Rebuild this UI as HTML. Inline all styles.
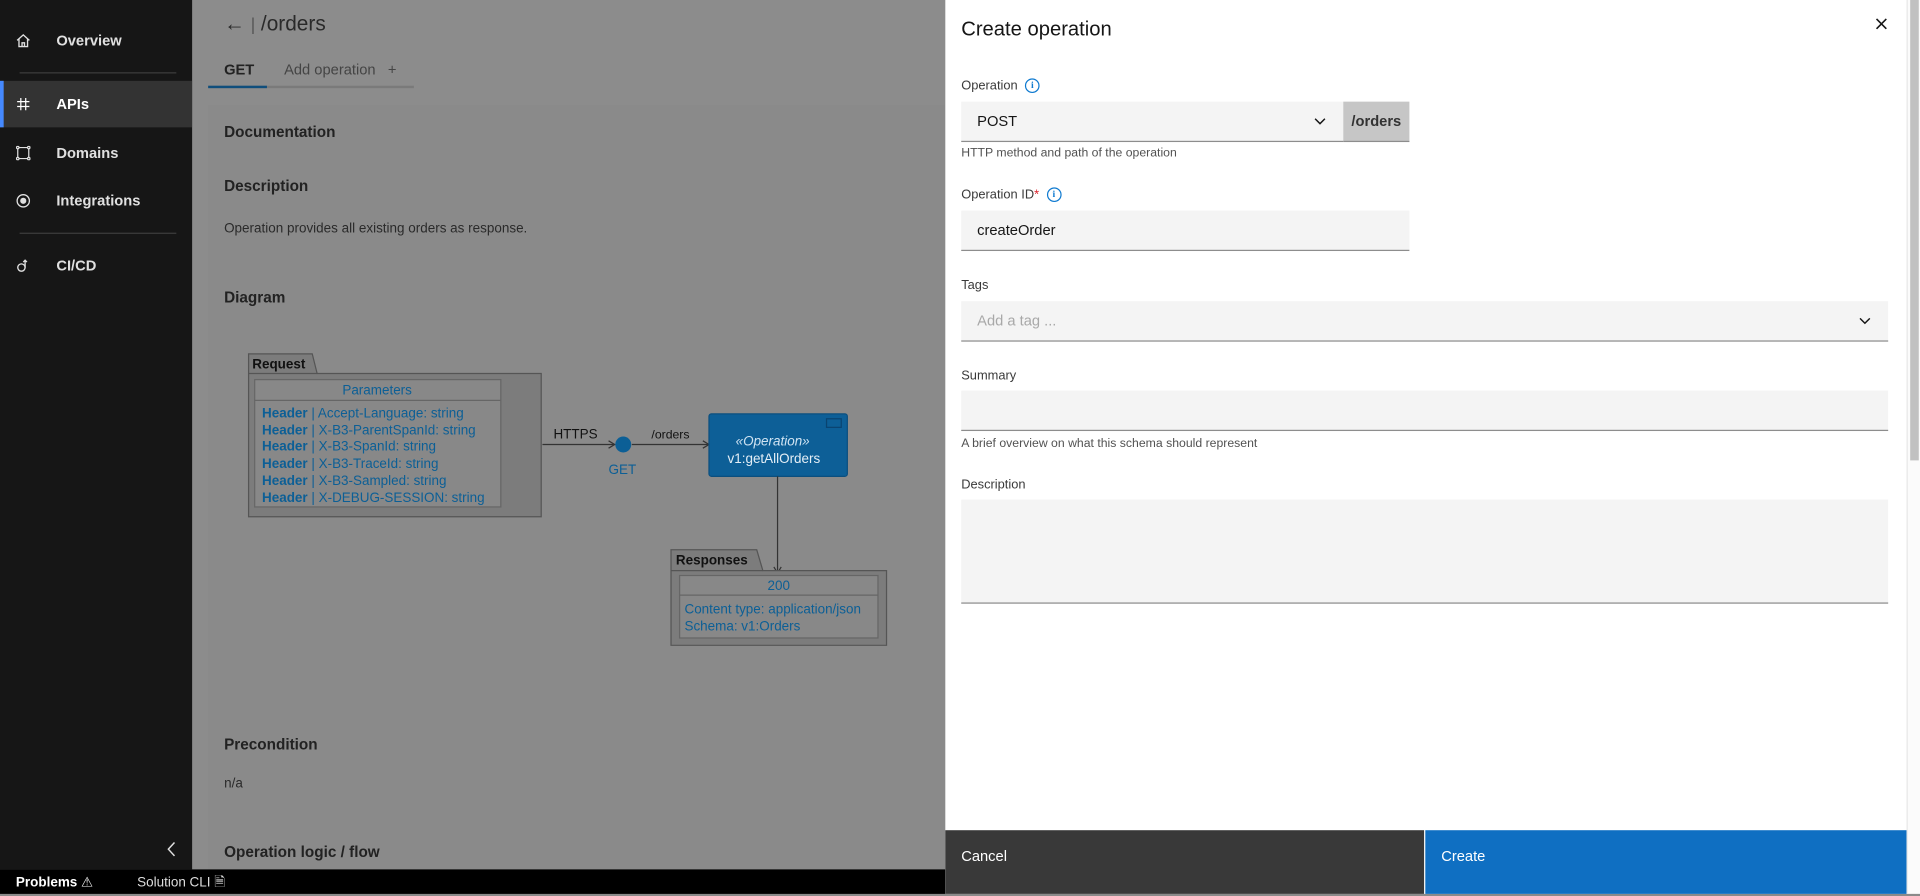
<!DOCTYPE html>
<html><head><meta charset="utf-8"><style>
*{box-sizing:border-box;margin:0;padding:0}
html,body{width:1920px;height:894px;overflow:hidden;background:#8a8a8a}
#w{position:absolute;left:0;top:0;width:1568px;height:730px;transform:scale(1.22449);transform-origin:0 0;font-family:"Liberation Sans","DejaVu Sans",sans-serif;}
.a{position:absolute}
.side{left:0;top:0;width:157px;height:710px;background:#161616}
.nav{position:absolute;left:0;width:157px;height:38px;color:#e0e0e0;font-size:12px;font-weight:bold;line-height:38px;padding-left:46px}
.nav svg{position:absolute;left:13px;top:13px}
.div{position:absolute;left:16px;width:128px;height:1px;background:#3d3d3d}
.main{left:157px;top:0;width:615px;height:710px;background:#8c8c8c}
.h{position:absolute;left:13px;font-size:12.5px;font-weight:bold;color:#222}
.lbl{position:absolute;left:13px;font-size:10.5px;color:#3a3a3a}
.fld{position:absolute;left:13px;background:#f4f4f4;border-bottom:1px solid #8d8d8d}
.help{position:absolute;left:13px;font-size:10px;color:#525252}
.info{display:inline-block;width:12px;height:12px;border:1.3px solid #0f7ad0;border-radius:50%;color:#0f7ad0;font-size:8px;text-align:center;line-height:10px;font-weight:bold;vertical-align:middle;margin-left:6px;font-family:"Liberation Serif",serif}
</style></head><body><div id="w">
<div class="a side">
 <div class="nav" style="top:14px"><svg width="12" height="12" viewBox="0 0 12 12" fill="none" stroke="#e0e0e0" stroke-width="1.1"><path d="M1 6 L6 1.5 L11 6 M2.5 5 V11 H9.5 V5 M5 11 V8 H7 V11"/></svg>Overview</div>
 <div class="div" style="top:59px"></div>
 <div class="nav" style="top:66px;background:#333;color:#fff"><div style="position:absolute;left:0;top:0;width:3px;height:38px;background:#4589ff"></div><svg width="12" height="12" viewBox="0 0 12 12" stroke="#fff" stroke-width="1"><path d="M4 1V11M8 1V11M1 4H11M1 8H11"/></svg>APIs</div>
 <div class="nav" style="top:106px"><svg width="12" height="12" viewBox="0 0 12 12" fill="none" stroke="#e0e0e0" stroke-width="1"><path d="M2.5 1.5H9.5M2.5 10.5H9.5M1.5 2.5V9.5M10.5 2.5V9.5"/><circle cx="1.5" cy="1.5" r="1"/><circle cx="10.5" cy="1.5" r="1"/><circle cx="1.5" cy="10.5" r="1"/><circle cx="10.5" cy="10.5" r="1"/></svg>Domains</div>
 <div class="nav" style="top:145px"><svg width="12" height="12" viewBox="0 0 12 12"><circle cx="6" cy="6" r="5" fill="none" stroke="#e0e0e0" stroke-width="1.1"/><circle cx="6" cy="6" r="2.5" fill="#e0e0e0"/></svg>Integrations</div>
 <div class="div" style="top:190px"></div>
 <div class="nav" style="top:198px"><svg width="12" height="12" viewBox="0 0 12 12" fill="none" stroke="#e0e0e0" stroke-width="1.1"><circle cx="4.5" cy="7.5" r="3"/><path d="M7.5 7.5V1.5M6 3L7.5 1.5L9 3"/></svg>CI/CD</div>
 <svg class="a" style="left:136px;top:687px" width="8" height="13" viewBox="0 0 8 13"><path d="M6.5 1L1.5 6.5L6.5 12" fill="none" stroke="#e0e0e0" stroke-width="1.2"/></svg>
</div>
<div class="a main">
 <div class="a" style="left:26px;top:10px;font-size:17px;color:#2a2a2a">&#8592; <span style="color:#555;font-size:14px">|</span> /orders</div>
 <div class="a" style="left:26px;top:50px;font-size:12px;font-weight:bold;color:#222">GET</div>
 <div class="a" style="left:75px;top:50px;font-size:12px;color:#444">Add operation &nbsp;&nbsp;+</div>
 <div class="a" style="left:13px;top:70px;width:168px;height:2px;background:#7a7a7a"></div>
 <div class="a" style="left:13px;top:70px;width:48px;height:2px;background:#0f4e7c"></div>
 <div class="a" style="left:13px;top:86px;width:602px;height:624px;background:#8a8a8a">
  <div class="h" style="top:15px">Documentation</div>
  <div class="h" style="top:59px">Description</div>
  <div class="a" style="left:13px;top:95px;font-size:11px;color:#2a2a2a">Operation provides all existing orders as response.</div>
  <div class="h" style="top:150px">Diagram</div>
  <div class="h" style="top:515px">Precondition</div>
  <div class="a" style="left:13px;top:548px;font-size:11px;color:#2a2a2a">n/a</div>
  <div class="h" style="top:603px">Operation logic / flow</div>
 </div>
 <svg class="a" style="left:0;top:0" width="615" height="710" font-family="Liberation Sans,sans-serif" font-size="11">
  <path d="M46 289 H98 L102 305 H285 V422 H46 Z" fill="#7c7c7c" stroke="#555" stroke-width="1"/>
  <line x1="46" y1="305" x2="102" y2="305" stroke="#555"/>
  <text x="49" y="301" font-weight="bold" fill="#111" font-size="11">Request</text>
  <rect x="51" y="310" width="201" height="104" fill="#888" stroke="#666"/>
  <line x1="51" y1="327" x2="252" y2="327" stroke="#666"/>
  <text x="151" y="322" text-anchor="middle" fill="#0c5f96">Parameters</text>
  <g fill="#0c5f96"><text x="57" y="341"><tspan font-weight="bold">Header</tspan> | Accept-Language: string</text>
  <text x="57" y="355"><tspan font-weight="bold">Header</tspan> | X-B3-ParentSpanId: string</text>
  <text x="57" y="368"><tspan font-weight="bold">Header</tspan> | X-B3-SpanId: string</text>
  <text x="57" y="382"><tspan font-weight="bold">Header</tspan> | X-B3-TraceId: string</text>
  <text x="57" y="396"><tspan font-weight="bold">Header</tspan> | X-B3-Sampled: string</text>
  <text x="57" y="410"><tspan font-weight="bold">Header</tspan> | X-DEBUG-SESSION: string</text></g>
  <line x1="286" y1="363" x2="344" y2="363" stroke="#333"/><path d="M340 360L345 363L340 366" fill="none" stroke="#333"/>
  <text x="295" y="358" fill="#111">HTTPS</text>
  <circle cx="352" cy="363" r="6.5" fill="#0c5f96"/>
  <text x="340" y="387" fill="#0c5f96">GET</text>
  <line x1="359" y1="363" x2="421" y2="363" stroke="#333"/><path d="M417 360L422 363L417 366" fill="none" stroke="#333"/>
  <text x="375" y="358" fill="#111" font-size="10">/orders</text>
  <rect x="422" y="338" width="113" height="51" rx="2" fill="#0d5f97" stroke="#0b4f7f"/>
  <rect x="518" y="342" width="12" height="7" fill="none" stroke="#0a4470"/>
  <text x="474" y="364" text-anchor="middle" fill="#cfe3f2" font-style="italic">«Operation»</text>
  <text x="475" y="378" text-anchor="middle" fill="#e4eef6">v1:getAllOrders</text>
  <line x1="478" y1="389" x2="478" y2="468" stroke="#333"/><path d="M475 463L478 468L481 463" fill="none" stroke="#333"/>
  <path d="M391 449 H461 L466 466 H567 V527 H391 Z" fill="#7c7c7c" stroke="#555"/>
  <line x1="391" y1="466" x2="466" y2="466" stroke="#555"/>
  <text x="395" y="461" font-weight="bold" fill="#111">Responses</text>
  <rect x="398" y="470" width="162" height="51" fill="#888" stroke="#666"/>
  <line x1="398" y1="486" x2="560" y2="486" stroke="#666"/>
  <text x="479" y="482" text-anchor="middle" fill="#0c5f96">200</text>
  <text x="402" y="501" fill="#0c5f96">Content type: application/json</text>
  <text x="402" y="515" fill="#0c5f96">Schema: v1:Orders</text>
 </svg>
</div>
<div class="a" style="left:0;top:710px;width:772px;height:20px;background:#000;color:#fff;font-size:11px;line-height:22px">
 <span style="position:absolute;left:13px;font-weight:bold">Problems &#9888;</span>
 <span style="position:absolute;left:112px;color:#ddd">Solution CLI &#128462;</span>
</div>
<div class="a" style="left:772px;top:0;width:785px;height:730px;background:#fff">
 <div class="a" style="left:13px;top:15px;font-size:16.5px;color:#161616">Create operation</div>
 <svg class="a" style="left:760px;top:15px" width="9" height="9" viewBox="0 0 9 9"><path d="M0.5 0.5L8.5 8.5M8.5 0.5L0.5 8.5" stroke="#161616" stroke-width="1.3"/></svg>
 <div class="lbl" style="top:64px">Operation<span class="info">i</span></div>
 <div class="fld" style="top:83px;width:312px;height:33px;font-size:12px;line-height:33px;padding-left:13px;color:#161616">POST<svg style="position:absolute;left:288px;top:13px" width="10" height="6" viewBox="0 0 10 6"><path d="M1 1L5 5L9 1" fill="none" stroke="#161616" stroke-width="1.2"/></svg></div>
 <div class="a" style="left:325px;top:83px;width:54px;height:33px;background:#c6c6c6;border-bottom:1px solid #8d8d8d;font-size:12px;font-weight:bold;line-height:33px;text-align:center;color:#333">/orders</div>
 <div class="help" style="top:120px">HTTP method and path of the operation</div>
 <div class="lbl" style="top:153px">Operation ID<span style="color:#da1e28">*</span><span class="info">i</span></div>
 <div class="fld" style="top:172px;width:366px;height:33px;font-size:12px;line-height:33px;padding-left:13px;color:#161616">createOrder</div>
 <div class="lbl" style="top:227px">Tags</div>
 <div class="fld" style="top:246px;width:757px;height:33px;font-size:12px;line-height:33px;padding-left:13px;color:#a8a8a8">Add a tag ...<svg style="position:absolute;left:733px;top:13px" width="10" height="6" viewBox="0 0 10 6"><path d="M1 1L5 5L9 1" fill="none" stroke="#161616" stroke-width="1.2"/></svg></div>
 <div class="lbl" style="top:301px">Summary</div>
 <div class="fld" style="top:319px;width:757px;height:33px"></div>
 <div class="help" style="top:357px">A brief overview on what this schema should represent</div>
 <div class="lbl" style="top:390px">Description</div>
 <div class="fld" style="top:408px;width:757px;height:85px"></div>
 <div class="a" style="left:0;top:678px;width:391px;height:52px;background:#393939;color:#fff;font-size:12px;padding:14px 13px">Cancel</div>
 <div class="a" style="left:392px;top:678px;width:393px;height:52px;background:#0f6fc2;color:#fff;font-size:12px;padding:14px 13px">Create</div>
</div>
<div class="a" style="left:1557px;top:0;width:11px;height:730px;background:#fbfbfb;border-left:1px solid #e8e8e8"><div style="position:absolute;left:2px;top:0;width:7px;height:376px;background:#c1c1c1"></div></div>
</div></body></html>
